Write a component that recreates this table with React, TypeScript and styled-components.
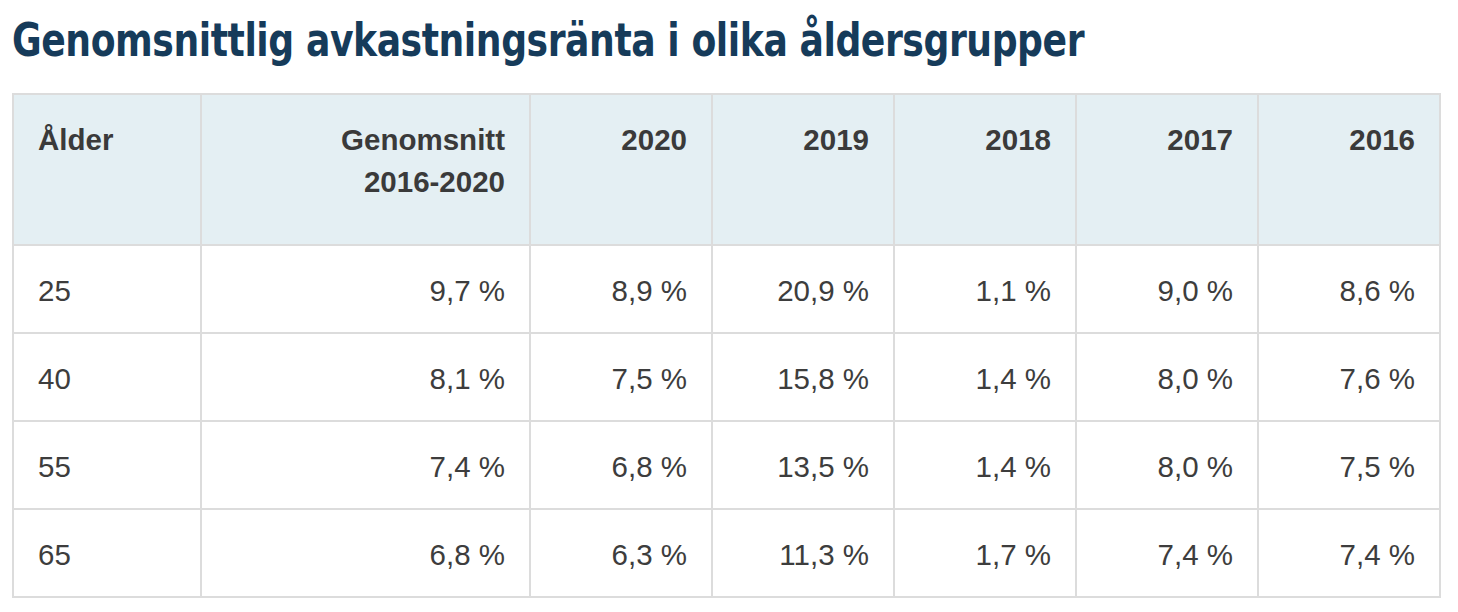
import styled, { createGlobalStyle } from "styled-components";

const GlobalStyle = createGlobalStyle`
    body {
        margin: 0;
        background: #ffffff;
        font-family: "Liberation Sans", Arial, sans-serif;
    }
`;

const Page = styled.div`
    padding: 10px 12px 0 12px;
`;

// narrow display face: condensed DejaVu squeezed a little more
const Title = styled.h2`
    margin: 0 0 23px 0;
    font-family: "DejaVu Sans Condensed", "DejaVu Sans", sans-serif;
    font-stretch: condensed;
    font-weight: 700;
    font-size: 46px;
    line-height: 60px;
    color: #163b5a;
    letter-spacing: -0.5px;
    white-space: nowrap;
    transform: scaleX(0.874);
    transform-origin: left center;
`;

const Table = styled.table`
    width: 1428px;
    border-collapse: collapse;
    table-layout: fixed;
    font-size: 29.5px;
    color: #3d3d3d;
`;

const HeadCell = styled.th<{ $align?: "left" | "right" }>`
    height: 102px;
    padding: 24px 24px 23px 24px;
    border: 2px solid #dcdcdc;
    background: #e4eff3;
    text-align: ${(p) => p.$align ?? "right"};
    vertical-align: top;
    font-weight: 700;
    line-height: 42px;
    color: #3a3a3a;
`;

const Cell = styled.td<{ $align?: "left" | "right" }>`
    height: 82px;
    padding: 4px 24px 0 24px;
    border: 2px solid #dcdcdc;
    text-align: ${(p) => p.$align ?? "right"};
    vertical-align: middle;
    line-height: 34px;
`;

const widths = [188, 329, 182, 182, 182, 182, 182];
const years = ["2020", "2019", "2018", "2017", "2016"];

const rows = [
    { age: "25", values: ["9,7 %", "8,9 %", "20,9 %", "1,1 %", "9,0 %", "8,6 %"] },
    { age: "40", values: ["8,1 %", "7,5 %", "15,8 %", "1,4 %", "8,0 %", "7,6 %"] },
    { age: "55", values: ["7,4 %", "6,8 %", "13,5 %", "1,4 %", "8,0 %", "7,5 %"] },
    { age: "65", values: ["6,8 %", "6,3 %", "11,3 %", "1,7 %", "7,4 %", "7,4 %"] }
];

const App = () => {
    return (
        <Page>
            <GlobalStyle />
            <Title>Genomsnittlig avkastningsränta i olika åldersgrupper</Title>
            <Table>
                <colgroup>
                    {widths.map((w, i) => (
                        <col key={i} style={{ width: w }} />
                    ))}
                </colgroup>
                <thead>
                    <tr>
                        <HeadCell $align="left">Ålder</HeadCell>
                        <HeadCell>
                            Genomsnitt
                            <br />
                            2016-2020
                        </HeadCell>
                        {years.map((y) => (
                            <HeadCell key={y}>{y}</HeadCell>
                        ))}
                    </tr>
                </thead>
                <tbody>
                    {rows.map((row) => (
                        <tr key={row.age}>
                            <Cell $align="left">{row.age}</Cell>
                            {row.values.map((v, i) => (
                                <Cell key={i}>{v}</Cell>
                            ))}
                        </tr>
                    ))}
                </tbody>
            </Table>
        </Page>
    );
};

export default App;
